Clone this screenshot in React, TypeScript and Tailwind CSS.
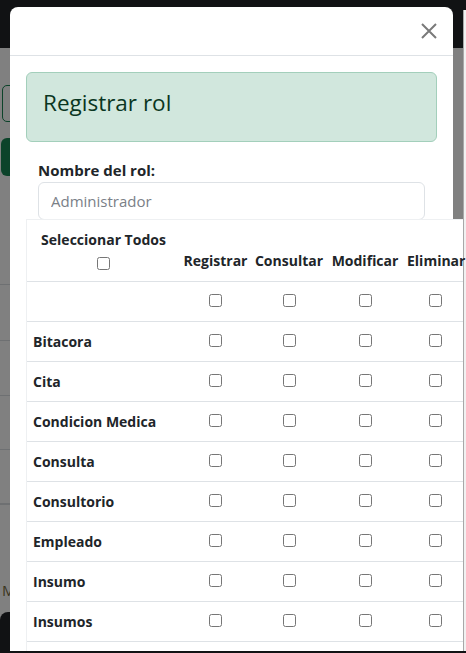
import React from "react";

const modules = [
  "",
  "Bitacora",
  "Cita",
  "Condicion Medica",
  "Consulta",
  "Consultorio",
  "Empleado",
  "Insumo",
  "Insumos",
  "",
];

function Box() {
  return <input type="checkbox" className="m-0 block w-[13px] h-[13px] accent-[#0d6efd]" />;
}

export default function App() {
  return (
    <div className="relative w-[466px] h-[653px] overflow-hidden bg-[#808080] font-['Open_Sans',sans-serif] text-[#212529]">
      {/* page behind overlay */}
      <div className="flex flex-col h-full">
        <div className="h-[48px] bg-[#111214] shrink-0" />
        <div className="flex flex-col flex-1">
          <div className="mt-[37px] ml-[2px] w-[40px] h-[37px] border border-[#0c432a] rounded-l-[5px]" />
          <div className="mt-[16px] ml-[1px] w-[40px] h-[38px] rounded-[6px] bg-[#0c432a]" />
          <div className="h-[109px] border-b border-[#6e7072]" />
          <div className="h-[56px] border-b border-[#6e7072]" />
          <div className="h-[55px] border-b border-[#6e7072]" />
          <div className="h-[54px] border-b border-[#6e7072]" />
          <div className="h-[55px] border-b-2 border-[#6e7072]" />
          <div className="h-[107px] pt-[78px] pl-[2px] text-[15px] leading-none text-[#3b3520]">M</div>
          <div className="flex-1 bg-[#111214] rounded-tl-[8px]" />
        </div>
      </div>

      {/* right scrollbar strip */}
      <div className="absolute right-0 top-[10px] bottom-0 w-[3px] bg-[#f1f1f1] border-l border-[#a8a8a8]" />

      {/* modal */}
      <div className="absolute left-[10px] top-[7px] w-[443px] h-[660px] bg-white rounded-t-[8px]">
        <div className="h-[49px] border-b border-[#dee2e6] flex items-center justify-end pr-[16px]">
          <svg width="16" height="16" viewBox="0 0 16 16" className="block">
            <path d="M1 1L15 15M15 1L1 15" stroke="#7a7a7a" strokeWidth="2" strokeLinecap="butt" />
          </svg>
        </div>
        <div className="p-4">
          <div className="bg-[#d1e7dd] border border-[#a3cfbb] rounded-[6px] p-4">
            <h3 className="text-[22.5px] leading-[28px] font-medium text-[#0a3622] mb-2">Registrar rol</h3>
          </div>
          <div className="mt-4 px-3">
            <label className="block text-[15px] leading-6 font-bold">Nombre del rol:</label>
            <input
              className="block w-full h-[38px] border border-[#dee2e6] rounded-[6px] px-3 text-[15px] placeholder:text-[#7a8087] outline-none"
              placeholder="Administrador"
            />
          </div>
          <div className="w-[437px] bg-white border-l border-t border-[#eef0f2] -mt-[1px]">
            <div className="grid grid-cols-[153px_71px_76px_76px_61px] h-[62px] border-b border-[#dee2e6] text-[14px] font-bold">
              <div className="flex flex-col items-center pt-[8px]">
                <span className="leading-6 whitespace-nowrap">Seleccionar Todos</span>
                <div className="h-[22px] flex items-center">
                  <Box />
                </div>
              </div>
              <div className="flex items-end justify-center pb-[8px] whitespace-nowrap leading-6">Registrar</div>
              <div className="flex items-end justify-center pb-[8px] whitespace-nowrap leading-6">Consultar</div>
              <div className="flex items-end justify-center pb-[8px] whitespace-nowrap leading-6">Modificar</div>
              <div className="flex items-end justify-start pl-[4px] pb-[8px] whitespace-nowrap leading-6">Eliminar</div>
            </div>
            {modules.map((m, i) => (
              <div
                key={i}
                className="grid grid-cols-[153px_71px_76px_76px_61px] h-[40px] border-b border-[#dee2e6] items-center text-[14px] font-bold"
              >
                <div className="pl-[6px] whitespace-nowrap leading-6">{m}</div>
                <div className="flex justify-center -mt-[2px]"><Box /></div>
                <div className="flex justify-center -mt-[2px]"><Box /></div>
                <div className="flex justify-center -mt-[2px]"><Box /></div>
                <div className="flex justify-start pl-[26px] -mt-[2px]"><Box /></div>
              </div>
            ))}
          </div>
        </div>
      </div>

      {/* bottom edge */}
      <div className="absolute left-0 right-0 bottom-0 h-[2px] bg-[#111214]" />
    </div>
  );
}
